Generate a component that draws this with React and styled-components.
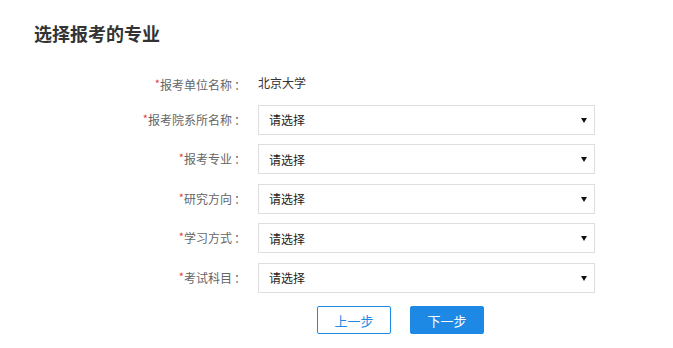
import React from 'react';
import styled, { createGlobalStyle } from 'styled-components';

const GlobalStyle = createGlobalStyle`
	html, body {
		margin: 0;
		padding: 0;
		background: #fff;
	}

	body {
		font-family: 'Noto Sans CJK SC', 'Noto Sans', sans-serif;
		color: #333;
	}
`;

const Page = styled.div`
	width: 673px;
	height: 348px;
	box-sizing: border-box;
	padding-top: 20px;
`;

const Title = styled.h2`
	margin: 0 0 0 34px;
	font-size: 18px;
	line-height: 26px;
	font-weight: bold;
	color: #333;
`;

const Form = styled.form`
	display: grid;
	grid-template-columns: 248px 337px;
	column-gap: 10px;
	row-gap: 9.5px;
	margin-top: 22px;
	align-items: start;
`;

const Label = styled.label`
	display: block;
	height: 30px;
	overflow: hidden;
	text-align: right;
	font-size: 12px;
	color: #666;
	line-height: ${(p) => (p.$tight ? '30px' : '26px')};
	white-space: nowrap;
	margin-bottom: ${(p) => (p.$tight ? '-3px' : '0')};

	&::before {
		content: '*';
		color: #e4393c;
		font-size: 11px;
		vertical-align: 2px;
	}
`;

const Colon = styled.span`
	display: inline-block;
	width: 16px;
	text-align: center;
`;

const StaticValue = styled.div`
	height: 30px;
	font-size: 12px;
	line-height: 30px;
	color: #333;
	margin-bottom: -3px;
`;

const SelectWrap = styled.div`
	position: relative;
	height: 30px;

	&::after {
		content: '';
		position: absolute;
		right: 8px;
		top: 13px;
		border-left: 3px solid transparent;
		border-right: 3px solid transparent;
		border-top: 5px solid #111;
		pointer-events: none;
	}
`;

const Select = styled.select`
	appearance: none;
	width: 100%;
	height: 30px;
	box-sizing: border-box;
	border: 1px solid #dedede;
	border-radius: 0;
	background: #fff;
	padding: 0 0 0 10px;
	font-family: 'Noto Sans CJK SC', sans-serif;
	font-size: 12px;
	color: #222;
	outline: none;
`;

const Actions = styled.div`
	display: flex;
	gap: 19px;
	margin: 13.5px 0 0 317px;
`;

const Button = styled.button`
	width: 74px;
	height: 28px;
	box-sizing: border-box;
	border-radius: 2px;
	font-family: 'Noto Sans CJK SC', sans-serif;
	font-size: 13px;
	cursor: pointer;
	border: 1px solid #1e88e5;
	color: ${(p) => (p.$primary ? '#fff' : '#1e88e5')};
	background: ${(p) => (p.$primary ? '#1e88e5' : '#fff')};
`;

const fields = ['报考院系所名称', '报考专业', '研究方向', '学习方式', '考试科目'];

export default function App() {
	return (
		<Page>
			<GlobalStyle />
			<Title>选择报考的专业</Title>
			<Form>
				<Label $tight>
					报考单位名称<Colon>：</Colon>
				</Label>
				<StaticValue>北京大学</StaticValue>
				{fields.map((f) => (
					<React.Fragment key={f}>
						<Label>
							{f}
							<Colon>：</Colon>
						</Label>
						<SelectWrap>
							<Select defaultValue=''>
								<option value=''>请选择</option>
							</Select>
						</SelectWrap>
					</React.Fragment>
				))}
			</Form>
			<Actions>
				<Button type='button'>上一步</Button>
				<Button type='button' $primary>
					下一步
				</Button>
			</Actions>
		</Page>
	);
}
